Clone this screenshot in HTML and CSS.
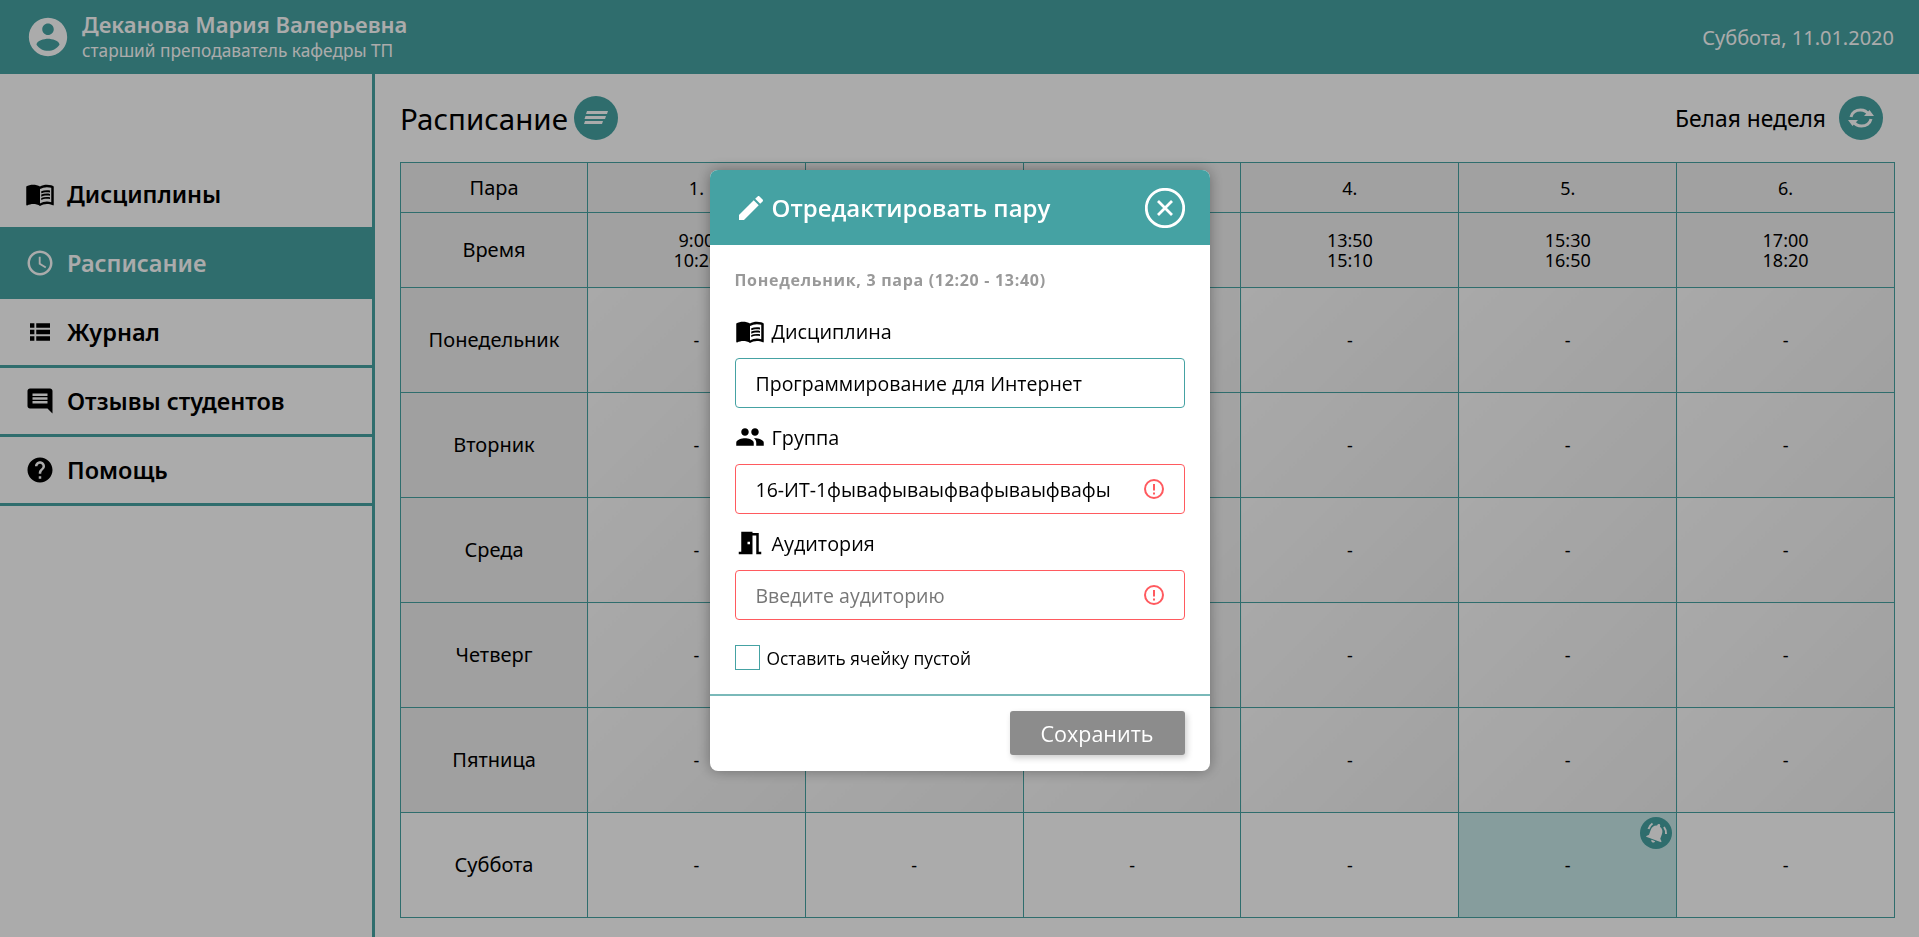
FILE: index.html
```html
<!DOCTYPE html>
<html lang="ru">
<head>
    <meta charset="UTF-8">
    <title>Расписание</title>
    <link rel="stylesheet" href="styles.css">
</head>
<body>
    <header class="top-bar">
        <div class="user">
            <svg class="user-icon" viewBox="0 0 24 24"><path d="M12 2C6.48 2 2 6.48 2 12s4.48 10 10 10 10-4.48 10-10S17.52 2 12 2zm0 3c1.66 0 3 1.34 3 3s-1.34 3-3 3-3-1.34-3-3 1.34-3 3-3zm0 14.2c-2.5 0-4.71-1.28-6-3.22.03-1.99 4-3.08 6-3.08 1.99 0 5.97 1.09 6 3.08-1.29 1.94-3.5 3.22-6 3.22z"/></svg>
            <div>
                <div class="user-name">Деканова Мария Валерьевна</div>
                <div class="user-post">старший преподаватель кафедры ТП</div>
            </div>
        </div>
        <div class="today">Суббота, 11.01.2020</div>
    </header>

    <div class="page">
        <nav class="sidebar">
            <a class="nav-item nav-first">
                <span class="nav-icon"><svg class="icon-30" viewBox="0 0 24 24"><path d="M21 5c-1.11-.35-2.33-.5-3.5-.5-1.95 0-4.05.4-5.5 1.5-1.45-1.1-3.55-1.5-5.5-1.5S2.45 4.9 1 6v14.65c0 .25.25.5.5.5.1 0 .15-.05.25-.05C3.1 20.45 5.05 20 6.5 20c1.95 0 4.05.4 5.5 1.5 1.35-.85 3.8-1.5 5.5-1.5 1.65 0 3.35.3 4.75 1.05.1.05.15.05.25.05.25 0 .5-.25.5-.5V6c-.6-.45-1.25-.75-2-1zm0 13.5c-1.1-.35-2.3-.5-3.5-.5-1.7 0-4.15.65-5.5 1.5V8c1.35-.85 3.8-1.5 5.5-1.5 1.2 0 2.4.15 3.5.5v11.5z"/><path d="M17.5 10.5c.88 0 1.73.09 2.5.26V9.24c-.79-.15-1.64-.24-2.5-.24-1.7 0-3.24.29-4.5.83v1.66c1.13-.64 2.7-.99 4.5-.99zM13 12.49v1.66c1.13-.64 2.7-.99 4.5-.99.88 0 1.73.09 2.5.26V11.9c-.79-.15-1.64-.24-2.5-.24-1.7 0-3.24.3-4.5.83zM17.5 14.33c-1.7 0-3.24.29-4.5.83v1.66c1.13-.64 2.7-.99 4.5-.99.88 0 1.73.09 2.5.26v-1.52c-.79-.16-1.64-.24-2.5-.24z"/></svg></span>
                Дисциплины
            </a>
            <a class="nav-item nav-active">
                <span class="nav-icon"><svg class="icon-30" viewBox="0 0 24 24"><path d="M11.99 2C6.47 2 2 6.48 2 12s4.47 10 9.99 10C17.52 22 22 17.52 22 12S17.52 2 11.99 2zM12 20c-4.42 0-8-3.58-8-8s3.58-8 8-8 8 3.58 8 8-3.58 8-8 8zm.5-13H11v6l5.25 3.15.75-1.23-4.5-2.67z"/></svg></span>
                Расписание
            </a>
            <a class="nav-item">
                <span class="nav-icon"><svg class="icon-30" viewBox="0 0 24 24"><path d="M4 5h3.5v3.6H4zM9 5h11v3.6H9zM4 10.2h3.5v3.6H4zM9 10.2h11v3.6H9zM4 15.4h3.5V19H4zM9 15.4h11V19H9z"/></svg></span>
                Журнал
            </a>
            <a class="nav-item">
                <span class="nav-icon"><svg class="icon-30" viewBox="0 0 24 24"><path transform="matrix(-1 0 0 1 24 0)" d="M20 2H4c-1.1 0-1.99.9-1.99 2L2 22l4-4h14c1.1 0 2-.9 2-2V4c0-1.1-.9-2-2-2zm-2 12H6v-2h12v2zm0-3H6V9h12v2zm0-3H6V6h12v2z"/></svg></span>
                Отзывы студентов
            </a>
            <a class="nav-item">
                <span class="nav-icon"><svg class="icon-30" viewBox="0 0 24 24"><path d="M12 2C6.48 2 2 6.48 2 12s4.48 10 10 10 10-4.48 10-10S17.52 2 12 2zm1 17h-2v-2h2v2zm2.07-7.75l-.9.92C13.45 12.9 13 13.5 13 15h-2v-.5c0-1.1.45-2.1 1.17-2.83l1.24-1.26c.37-.36.59-.86.59-1.41 0-1.1-.9-2-2-2s-2 .9-2 2H8c0-2.21 1.79-4 4-4s4 1.79 4 4c0 .88-.36 1.68-.93 2.25z"/></svg></span>
                Помощь
            </a>
        </nav>

        <main class="content">
            <div class="content-head">
                <div class="head-left">
                    <h1>Расписание</h1>
                    <span class="round-btn">
                        <svg width="24" height="14" viewBox="0 0 24 14"><path d="M3 0H24L23 3H2zM1.500 5H22L21 8H.5zM1 10H19L18 13H0z"/></svg>
                    </span>
                </div>
                <div class="head-right">
                    <span class="week">Белая неделя</span>
                    <span class="round-btn">
                        <svg width="28" height="20" viewBox="0 0 28 20"><path class="sync-arc" d="M4 9C5 4.500 9 2 13.500 2c3.500 0 6.500 1.700 8 4.500"/><path class="sync-arc" d="M24 11c-1 4.500-5 7-9.500 7-3.500 0-6.500-1.700-8-4.500"/><path class="sync-head" d="M17 8h10l-4.500-6zM11 12H1l4.500 6z"/></svg>
                    </span>
                </div>
            </div>

            <table class="schedule">
                <colgroup>
                    <col class="col-day">
                    <col><col><col><col><col><col>
                </colgroup>
                <tr class="row-num">
                    <th>Пара</th><td>1.</td><td>2.</td><td>3.</td><td>4.</td><td>5.</td><td>6.</td>
                </tr>
                <tr class="row-time">
                    <th>Время</th>
                    <td>9:00<br>10:20</td><td>10:40<br>12:00</td><td>12:20<br>13:40</td>
                    <td>13:50<br>15:10</td><td>15:30<br>16:50</td><td>17:00<br>18:20</td>
                </tr>
                <tr class="row-day">
                    <th>Понедельник</th><td>-</td><td>-</td><td>-</td><td>-</td><td>-</td><td>-</td>
                </tr>
                <tr class="row-day">
                    <th>Вторник</th><td>-</td><td>-</td><td>-</td><td>-</td><td>-</td><td>-</td>
                </tr>
                <tr class="row-day">
                    <th>Среда</th><td>-</td><td>-</td><td>-</td><td>-</td><td>-</td><td>-</td>
                </tr>
                <tr class="row-day">
                    <th>Четверг</th><td>-</td><td>-</td><td>-</td><td>-</td><td>-</td><td>-</td>
                </tr>
                <tr class="row-day">
                    <th>Пятница</th><td>-</td><td>-</td><td>-</td><td>-</td><td>-</td><td>-</td>
                </tr>
                <tr class="row-day row-today">
                    <th>Суббота</th><td>-</td><td>-</td><td>-</td><td>-</td>
                    <td class="cell-now">
                        -
                        <span class="bell">
                            <svg width="26" height="26" viewBox="0 0 26 26">
                                <path transform="rotate(20 13 13) translate(1 1)" d="M12 22c1.100 0 2-.9 2-2h-4c0 1.100.9 2 2 2zm6-6v-5c0-3.070-1.630-5.640-4.500-6.320V4c0-.83-.67-1.500-1.500-1.500s-1.500.67-1.500 1.500v.68C7.640 5.360 6 7.920 6 11v5l-2 2v1h16v-1l-2-2z"/>
                                <path class="bell-ring" d="M5.500 9C6 6.500 7.500 4.800 9.500 3.500M21 7c1.500 2 2.300 4.300 2 7"/>
                            </svg>
                        </span>
                    </td>
                    <td>-</td>
                </tr>
            </table>
        </main>
    </div>

    <div class="overlay">
        <div class="modal">
            <div class="modal-head">
                <svg class="modal-pencil" viewBox="0 0 24 24"><path d="M3 17.250V21h3.750L17.810 9.940l-3.750-3.750L3 17.250zM20.710 7.040c.39-.39.39-1.020 0-1.410l-2.340-2.340c-.39-.39-1.020-.39-1.410 0l-1.830 1.830 3.750 3.750 1.830-1.830z"/></svg>
                <span class="modal-title">Отредактировать пару</span>
                <svg class="modal-close" viewBox="0 0 40 40"><circle cx="20" cy="20" r="18.700"/><path d="M13 13l14 14M27 13L13 27"/></svg>
            </div>
            <div class="modal-body">
                <div class="lesson-info">Понедельник, 3 пара (12:20 - 13:40)</div>

                <label class="field-label">
                    <span class="label-icon"><svg class="icon-30" viewBox="0 0 24 24"><path d="M21 5c-1.110-.35-2.330-.5-3.500-.5-1.950 0-4.050.4-5.500 1.500-1.450-1.100-3.550-1.500-5.500-1.500S2.450 4.900 1 6v14.650c0 .25.25.5.5.5.1 0 .15-.05.25-.05C3.100 20.450 5.050 20 6.500 20c1.950 0 4.050.4 5.500 1.500 1.350-.85 3.800-1.500 5.500-1.500 1.650 0 3.350.3 4.750 1.050.1.05.15.05.25.05.25 0 .5-.25.5-.5V6c-.6-.45-1.250-.75-2-1zm0 13.500c-1.100-.35-2.300-.5-3.500-.5-1.700 0-4.150.65-5.500 1.500V8c1.350-.85 3.800-1.500 5.500-1.500 1.200 0 2.400.15 3.500.5v11.500z"/><path d="M17.500 10.500c.88 0 1.730.09 2.500.26V9.240c-.79-.15-1.640-.24-2.500-.24-1.700 0-3.240.29-4.500.83v1.660c1.130-.64 2.700-.99 4.500-.99zM13 12.490v1.660c1.130-.64 2.700-.99 4.500-.99.88 0 1.730.09 2.500.26V11.900c-.79-.15-1.640-.24-2.500-.24-1.700 0-3.240.3-4.500.83zM17.500 14.330c-1.700 0-3.240.29-4.500.83v1.660c1.130-.64 2.700-.99 4.500-.99.88 0 1.730.09 2.500.26v-1.520c-.79-.16-1.640-.24-2.500-.24z"/></svg></span>
                    Дисциплина
                </label>
                <div class="field">
                    <input class="field-input" type="text" value="Программирование для Интернет">
                </div>

                <label class="field-label">
                    <span class="label-icon"><svg class="icon-30" viewBox="0 0 24 24"><path d="M16 11c1.660 0 2.990-1.340 2.990-3S17.660 5 16 5c-1.660 0-3 1.340-3 3s1.340 3 3 3zm-8 0c1.660 0 2.990-1.340 2.990-3S9.660 5 8 5C6.340 5 5 6.340 5 8s1.340 3 3 3zm0 2c-2.330 0-7 1.170-7 3.500V19h14v-2.500c0-2.330-4.670-3.500-7-3.500zm8 0c-.29 0-.62.02-.97.05 1.160.84 1.970 1.970 1.970 3.450V19h6v-2.500c0-2.330-4.670-3.500-7-3.500z"/></svg></span>
                    Группа
                </label>
                <div class="field">
                    <input class="field-input field-error" type="text" value="16-ИТ-1фывафываыфвафываыфвафы">
                    <svg class="error-icon" viewBox="0 0 20 20"><circle cx="10" cy="10" r="9"/><path d="M10 5v6.500M10 13.500v2"/></svg>
                </div>

                <label class="field-label">
                    <span class="label-icon"><svg class="icon-30" viewBox="0 0 24 24"><path fill-rule="evenodd" d="M14 6v15H3v-2h2V3h9v1h5v15h2v2h-4V6h-3zm-4 5v2h2v-2h-2z"/></svg></span>
                    Аудитория
                </label>
                <div class="field">
                    <input class="field-input field-error" type="text" placeholder="Введите аудиторию">
                    <svg class="error-icon" viewBox="0 0 20 20"><circle cx="10" cy="10" r="9"/><path d="M10 5v6.500M10 13.500v2"/></svg>
                </div>

                <div class="empty-check">
                    <span class="check-box"></span>
                    Оставить ячейку пустой
                </div>
            </div>
            <div class="modal-foot">
                <button class="save-btn">Сохранить</button>
            </div>
        </div>
    </div>
</body>
</html>
```

FILE: styles.css
```css
/* styles.css */

* {
    box-sizing: border-box;
}

body {
    margin: 0;
    height: 937px;
    overflow: hidden;
    font-family: "Noto Sans", "Open Sans", sans-serif;
    color: #000;
    background-color: #fff;
}

svg {
    display: block;
}

.icon-30 {
    width: 30px;
    height: 30px;
}

/* top bar */

.top-bar {
    height: 74px;
    display: flex;
    justify-content: space-between;
    align-items: center;
    padding: 0 25px 0 25px;
    background-color: #46a3a3;
    color: #fff;
}

.user {
    display: flex;
    align-items: center;
    gap: 11px;
}

.user-icon {
    width: 46px;
    height: 46px;
    fill: #fff;
}

.user-name {
    font-size: 22px;
    font-weight: 600;
    line-height: 27px;
}

.user-post {
    font-size: 17.3px;
    line-height: 26px;
}

.today {
    font-size: 20px;
}

/* sidebar */

.page {
    display: flex;
    height: 863px;
}

.sidebar {
    width: 375px;
    flex-shrink: 0;
    padding-top: 87px;
    border-right: 3px solid #46a3a3;
}

.nav-item {
    display: flex;
    align-items: center;
    gap: 12px;
    height: 69px;
    padding: 0 0 0 25px;
    border-bottom: 3px solid #46a3a3;
    font-size: 23.5px;
    font-weight: 600;
}

.nav-icon {
    width: 30px;
    display: flex;
    justify-content: center;
}

.nav-first {
    height: 66px;
    border-bottom: 0;
}

.nav-active {
    height: 72px;
    margin-right: -3px;
    border-bottom: 0;
    background-color: #46a3a3;
    color: #fff;
}

.nav-active svg {
    fill: #fff;
}

/* content */

.content {
    flex: 1;
    padding: 22px 24px 0 25px;
}

.content-head {
    display: flex;
    justify-content: space-between;
    margin-bottom: 22px;
}

.head-left, .head-right {
    display: flex;
    align-items: center;
}

.head-left {
    gap: 6px;
}

.head-right {
    gap: 13px;
    padding-right: 12px;
}

h1 {
    margin: 0;
    font-size: 29.5px;
    font-weight: 400;
}

.week {
    font-size: 22.8px;
}

.round-btn {
    width: 44px;
    height: 44px;
    border-radius: 50%;
    background-color: #46a3a3;
    display: flex;
    align-items: center;
    justify-content: center;
    fill: #fff;
}

.sync-arc {
    fill: none;
    stroke: #fff;
    stroke-width: 3;
}

.sync-head {
    fill: #fff;
}

/* table */

.schedule {
    width: 1495px;
    table-layout: fixed;
    border-collapse: collapse;
    font-size: 18px;
    line-height: 20px;
    text-align: center;
}

.col-day {
    width: 187px;
}

.schedule th, .schedule td {
    padding: 0;
    border: 1px solid #46a3a3;
    font-weight: 400;
    background: linear-gradient(135deg, #fcfcfc, #f0f0f0);
}

.schedule th {
    font-size: 20px;
    background: #efefef;
}

.row-num td, .row-time td {
    background: #f0f0f0;
}

.row-num {
    height: 50px;
}

.row-time {
    height: 75px;
}

.row-day {
    height: 105px;
}

.row-today th, .row-today td {
    background: #fff;
}

.schedule .cell-now {
    position: relative;
    background: #c8eaea;
}

.bell {
    position: absolute;
    top: 4px;
    right: 4px;
    width: 32px;
    height: 32px;
    border-radius: 50%;
    background-color: #46a3a3;
    display: flex;
    align-items: center;
    justify-content: center;
    fill: #fff;
}

.bell-ring {
    fill: none;
    stroke: #fff;
    stroke-width: 2;
}

/* modal */

.overlay {
    position: fixed;
    top: 0;
    left: 0;
    width: 100%;
    height: 100%;
    padding-top: 170px;
    background-color: rgba(0, 0, 0, 0.33);
    display: flex;
    justify-content: center;
    align-items: flex-start;
}

.modal {
    width: 500px;
    height: 601px;
    border-radius: 8px;
    overflow: hidden;
    background-color: #fff;
    box-shadow: 0 0 14px rgba(0, 0, 0, 0.35);
    font-family: "Open Sans", "Noto Sans", sans-serif;
}

.modal-head {
    height: 75px;
    display: flex;
    align-items: center;
    padding: 0 25px 0 25px;
    background-color: #45a2a3;
    color: #fff;
}

.modal-pencil {
    width: 32px;
    height: 32px;
    fill: #fff;
    margin-right: 5px;
}

.modal-title {
    flex: 1;
    font-size: 24px;
    font-weight: 600;
}

.modal-close {
    width: 40px;
    height: 40px;
    fill: none;
    stroke: #fff;
    stroke-width: 2.800;
}

.modal-body {
    height: 451px;
    padding: 24px 25px 0 25px;
    border-bottom: 2px solid #7ab9b9;
}

.lesson-info {
    font-size: 16px;
    font-weight: 700;
    letter-spacing: 0.7px;
    color: #999;
    line-height: 22px;
    margin-bottom: 25px;
}

.field-label {
    display: flex;
    align-items: center;
    height: 30px;
    font-size: 19.8px;
    margin-bottom: 12px;
}

.label-icon {
    width: 37px;
    display: flex;
    justify-content: flex-start;
}

.field {
    position: relative;
    margin-bottom: 14px;
}

.field-input {
    display: block;
    width: 100%;
    height: 50px;
    padding: 0 60px 0 20px;
    border: 1px solid #45a2a3;
    border-radius: 4px;
    font-family: inherit;
    font-size: 19.5px;
    color: #000;
    background-color: #fff;
}

.field-input::placeholder {
    color: #777;
}

.field-error {
    border-color: #ff5a5f;
}

.error-icon {
    position: absolute;
    right: 21px;
    top: 15px;
    width: 20px;
    height: 20px;
    fill: none;
    stroke: #ff5a5f;
    stroke-width: 2;
}

.empty-check {
    display: flex;
    align-items: center;
    gap: 7px;
    margin-top: 25px;
    font-size: 17.4px;
}

.check-box {
    width: 25px;
    height: 25px;
    border: 1px solid #45a2a3;
}

.modal-foot {
    display: flex;
    justify-content: flex-end;
    padding: 15px 25px 0 0;
}

.save-btn {
    width: 175px;
    height: 44px;
    border: 0;
    border-radius: 3px;
    background-color: #8c8c8c;
    color: #fff;
    font-family: inherit;
    font-size: 21.5px;
    font-weight: 500;
    box-shadow: 2px 3px 6px rgba(0, 0, 0, 0.2);
}
```
